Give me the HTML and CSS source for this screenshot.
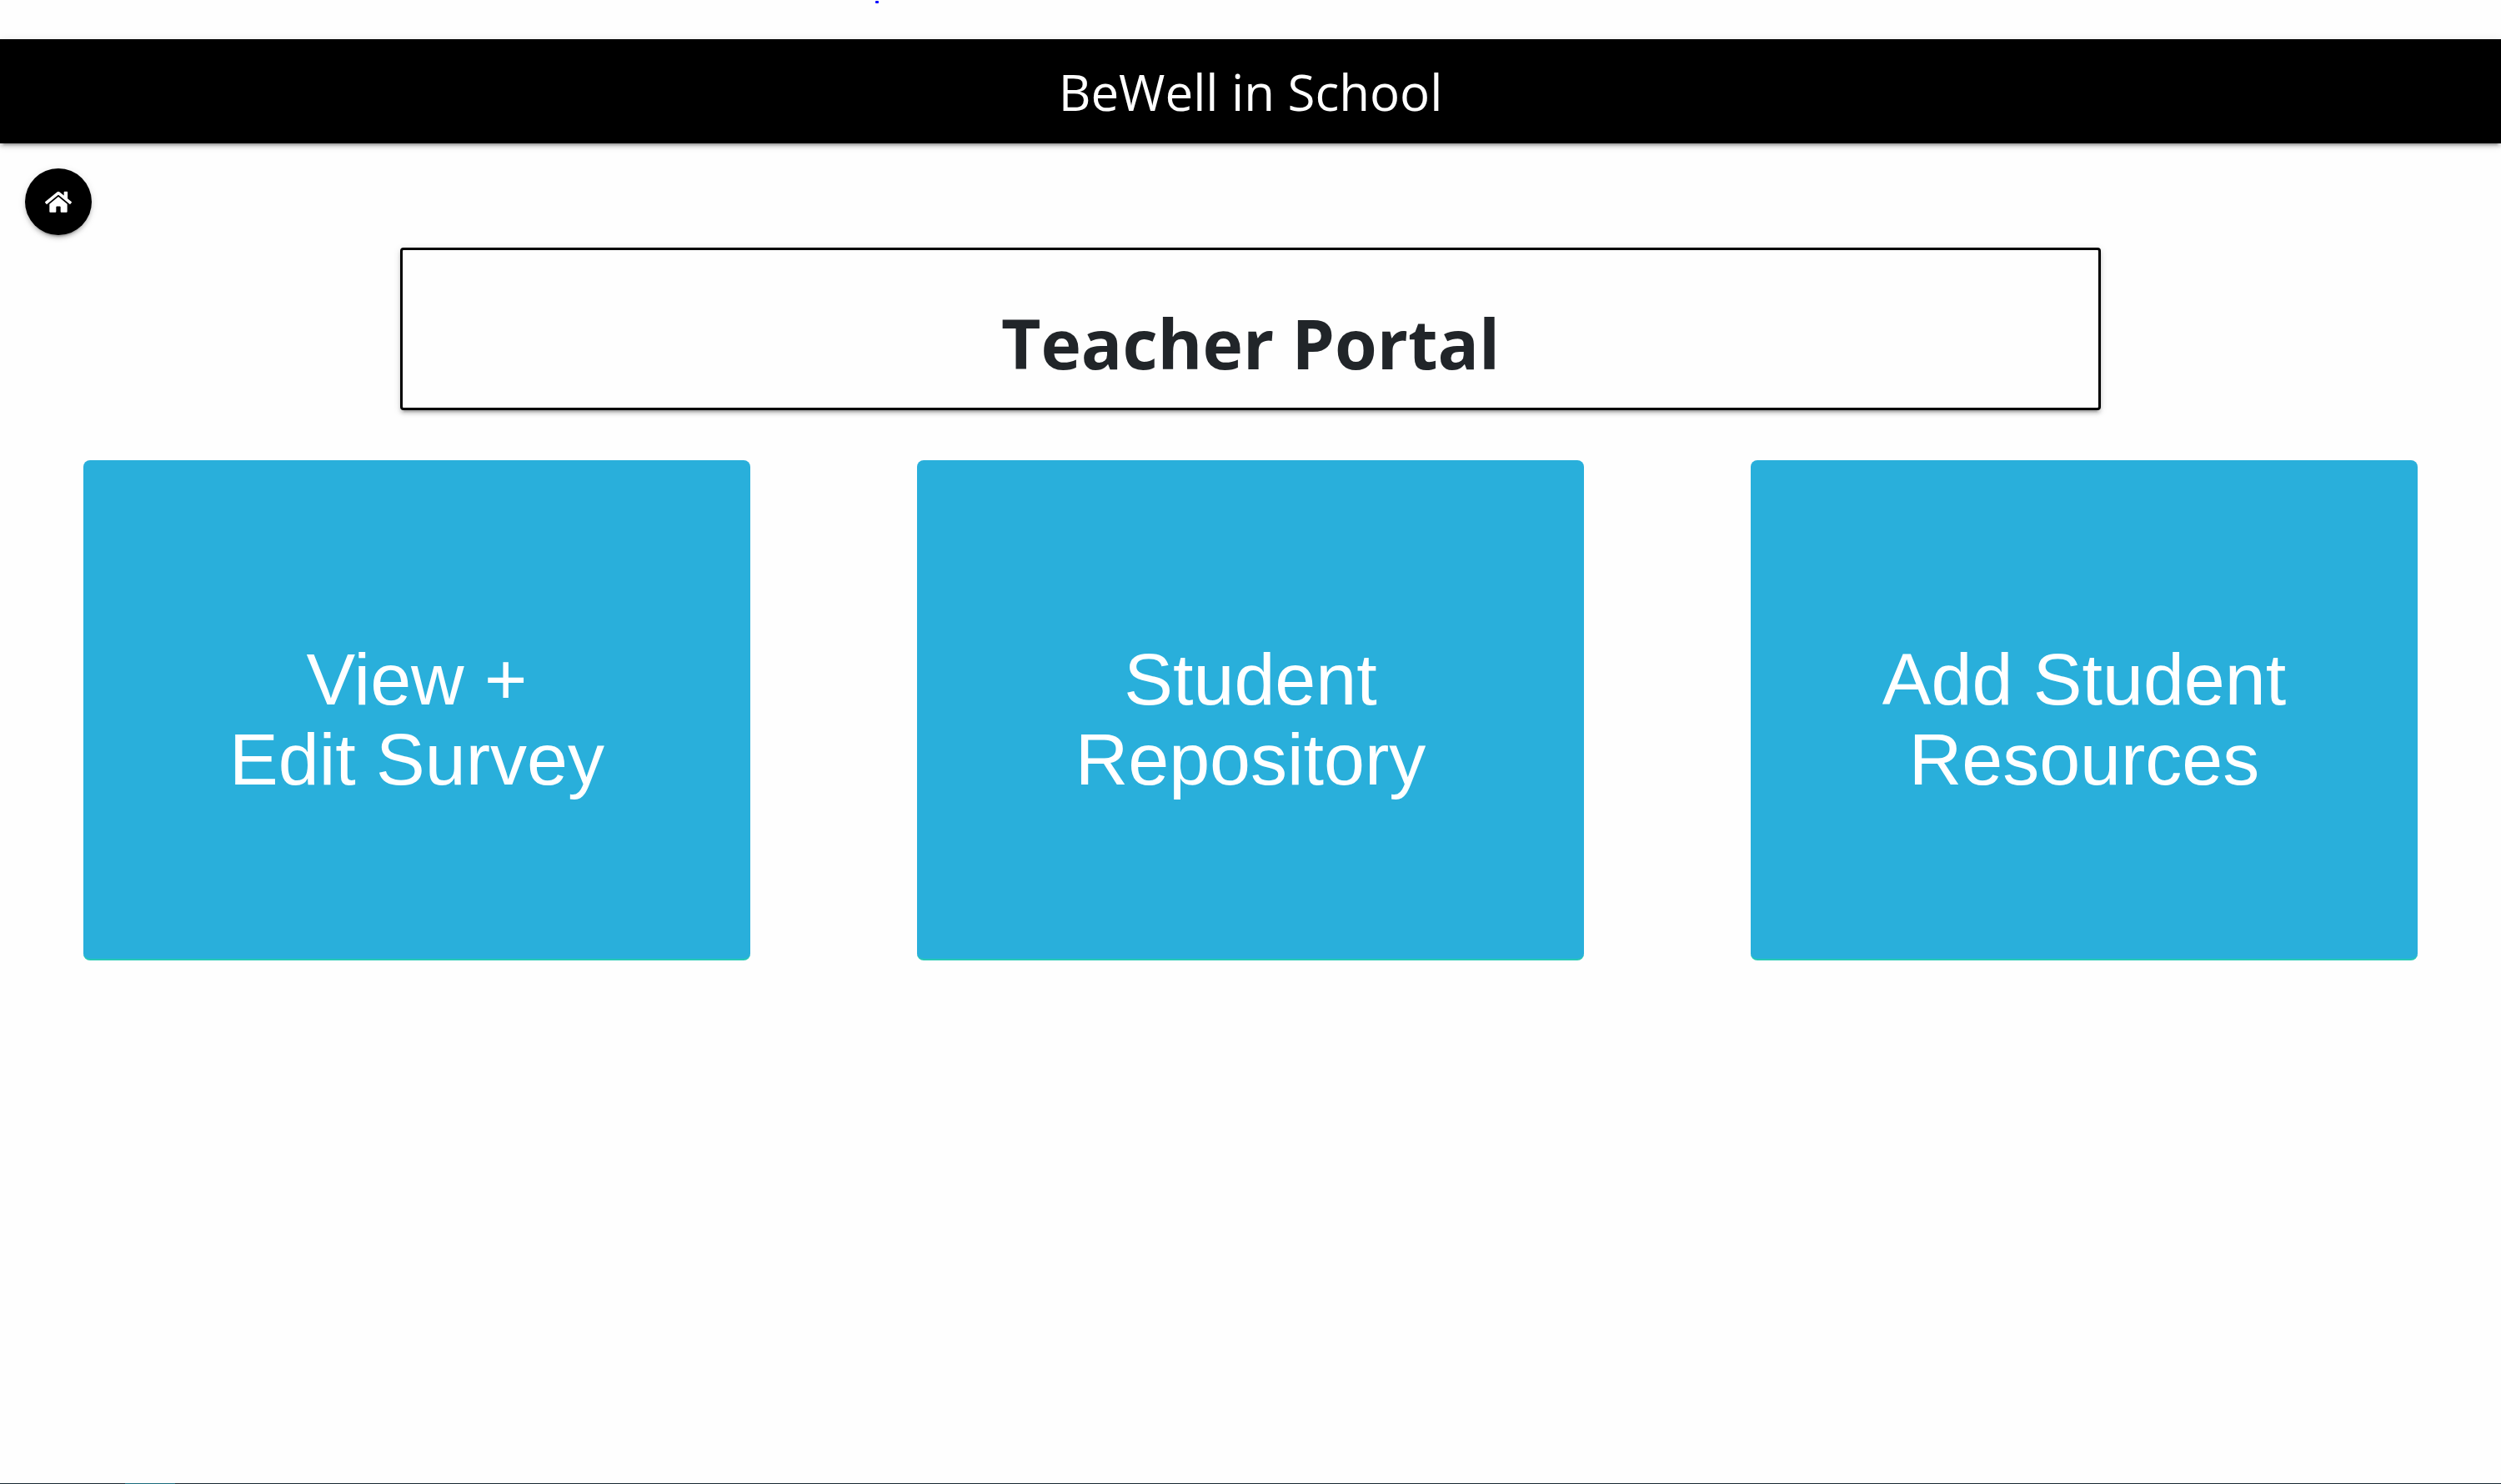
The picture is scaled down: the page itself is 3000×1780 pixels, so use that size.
FILE: index.html
```html
<!DOCTYPE html>
<html lang="en">
<head>
<meta charset="utf-8">
<title>BeWell in School</title>
<link rel="stylesheet" href="styles.css">
</head>
<body>
<div class="top-gap"><span class="speck"></span></div>
<header class="banner">BeWell in School</header>
<nav class="nav">
  <a class="home" href="#" aria-label="Home">
    <svg class="home-icon" viewBox="0 0 576 512" aria-hidden="true"><path fill="currentColor" d="M280.37 148.26L96 300.11V464a16 16 0 0 0 16 16l112.06-.29a16 16 0 0 0 15.92-16V368a16 16 0 0 1 16-16h64a16 16 0 0 1 16 16v95.64a16 16 0 0 0 16 16.05L464 480a16 16 0 0 0 16-16V300L295.67 148.26a12.19 12.19 0 0 0-15.3 0zM571.6 251.47L488 182.56V44.05a12 12 0 0 0-12-12h-56a12 12 0 0 0-12 12v72.61L318.47 43a48 48 0 0 0-61 0L4.34 251.47a12 12 0 0 0-1.6 16.9l25.5 31A12 12 0 0 0 45.15 301l235.22-193.74a12.19 12.19 0 0 1 15.3 0L530.9 301a12 12 0 0 0 16.9-1.6l25.5-31a12 12 0 0 0-1.7-16.93z"/></svg>
  </a>
</nav>
<main class="portal">
  <h1 class="title">Teacher Portal</h1>
  <div class="cards">
    <button class="card" type="button">View +<br>Edit Survey</button>
    <button class="card" type="button">Student<br>Repository</button>
    <button class="card" type="button">Add Student<br>Resources</button>
  </div>
</main>
<footer class="edge"></footer>
</body>
</html>
```

FILE: styles.css
```css
:root {
  --raised: 0 4px 4px rgba(0, 0, 0, 0.14), 0 6px 2px -4px rgba(0, 0, 0, 0.2), 0 2px 10px rgba(0, 0, 0, 0.12);
}

* {
  box-sizing: border-box;
}

body {
  margin: 0;
  min-height: 100vh;
  display: flex;
  flex-direction: column;
  background: #fefefe;
  color: #212529;
  font-family: "Open Sans", "Noto Sans", sans-serif;
}

.top-gap {
  height: 47px;
  padding: 1px 0 0 35%;
}

.speck {
  display: block;
  width: 4px;
  height: 3px;
  border-radius: 1px;
  background: #00f;
}

.banner {
  padding: 15px 0 14px;
  background: #000;
  color: #fff;
  font-size: 60px;
  line-height: 96px;
  text-align: center;
  box-shadow: var(--raised);
}

.nav {
  padding: 30px 30px 0;
}

.home {
  display: flex;
  align-items: center;
  justify-content: center;
  width: 80px;
  height: 80px;
  border-radius: 50%;
  background: #000;
  color: #fff;
  box-shadow: var(--raised);
}

.home-icon {
  width: 32px;
}

.portal {
  margin-top: 15px;
}

.title {
  width: 68%;
  margin: 0 auto 60px;
  padding: 63px 0 30px;
  border: 3px solid #000;
  border-radius: 4px;
  background: #fefefe;
  font-size: 82px;
  font-weight: 700;
  line-height: 96px;
  text-align: center;
  box-shadow: var(--raised);
}

.cards {
  display: grid;
  grid-template-columns: repeat(3, 1fr);
  gap: 200px;
  padding: 0 100px;
}

.card {
  height: 600px;
  padding: 24px 0 0;
  border: 0;
  border-bottom: 2px solid #26c9b4;
  border-radius: 8px;
  background: #29afdb;
  color: #fff;
  font-family: "Liberation Sans", Arial, sans-serif;
  font-size: 88px;
  line-height: 96px;
}

.edge {
  height: 1px;
  margin-top: auto;
  background: linear-gradient(90deg, #182a33 5%, #1b6c7e 5% 7%, #182a33 7%);
}
```
